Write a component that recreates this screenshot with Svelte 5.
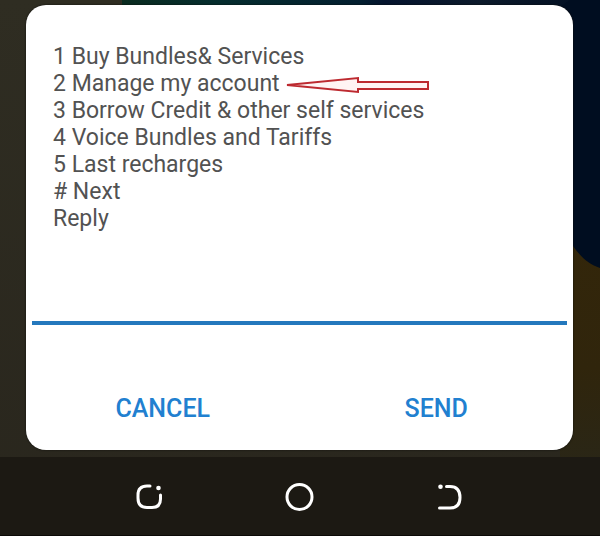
<script>
    let reply = $state("");

    const options = [
        "1 Buy Bundles& Services",
        "2 Manage my account",
        "3 Borrow Credit & other self services",
        "4 Voice Bundles and Tariffs",
        "5 Last recharges",
        "# Next",
    ];
    const marked = 1;
</script>

<div class="screen">
    <svg class="wallpaper" viewBox="0 0 600 536" preserveAspectRatio="none" aria-hidden="true">
        <defs>
            <linearGradient id="base" x1="0" y1="0" x2="0" y2="1">
                <stop offset="0" stop-color="#2f2d22" />
                <stop offset="1" stop-color="#29261d" />
            </linearGradient>
            <linearGradient id="top" x1="0" y1="0" x2="1" y2="0">
                <stop offset="0" stop-color="#0a2c20" />
                <stop offset="0.2" stop-color="#052d2e" />
                <stop offset="0.5" stop-color="#031f30" />
                <stop offset="0.55" stop-color="#04142e" />
                <stop offset="0.75" stop-color="#0c1a2b" />
                <stop offset="1" stop-color="#000d20" />
            </linearGradient>
            <linearGradient id="gold" x1="0" y1="0" x2="0" y2="1">
                <stop offset="0" stop-color="#33260a" />
                <stop offset="0.6" stop-color="#30250c" />
                <stop offset="1" stop-color="#2a2616" />
            </linearGradient>
        </defs>
        <rect width="600" height="536" fill="url(#base)" />
        <rect x="122" width="478" height="30" fill="url(#top)" />
        <rect x="560" y="230" width="40" height="230" fill="url(#gold)" />
        <path d="M540 20L570 0H600V268C588 264 580 256 573 246L540 200Z" fill="#000d20" />
    </svg>

    <form class="dialog" onsubmit={(e) => e.preventDefault()}>
        <div class="message">
            {#each options as option, i}
                <div class="option">
                    <span>{option}</span>
                    {#if i === marked}
                        <svg class="arrow" width="146" height="20" viewBox="0 0 146 20" aria-hidden="true">
                            <path d="M3 11L74 4V8H144V15H74V18Z" />
                        </svg>
                    {/if}
                </div>
            {/each}
            <label class="option" for="reply">Reply</label>
        </div>
        <input id="reply" type="text" autocomplete="off" bind:value={reply} />
        <div class="actions">
            <button type="button">CANCEL</button>
            <button type="submit">SEND</button>
        </div>
    </form>

    <nav class="navbar">
        <button type="button" aria-label="Recent apps">
            <svg width="30" height="30" viewBox="0 0 30 30">
                <path d="M15 4H12C6 4 3 7 3 13V16C3 22 6 25.5 12 25.5H17C23 25.5 25.5 22 25.5 17V13" />
                <circle class="dot" cx="23.5" cy="6" r="2.3" />
            </svg>
        </button>
        <button type="button" aria-label="Home">
            <svg width="30" height="30" viewBox="0 0 30 30">
                <circle cx="14.5" cy="15" r="12.5" />
            </svg>
        </button>
        <button type="button" aria-label="Back">
            <svg width="30" height="30" viewBox="0 0 30 30">
                <path d="M11.5 4.5H15C22 4.5 25 8 25 15.5C25 22.5 22 26 15 26H4.5" />
                <circle class="dot" cx="5.5" cy="4.8" r="2.3" />
            </svg>
        </button>
    </nav>
</div>

<style>
    :global(body) {
        margin: 0;
        background: #1c1913;
    }

    .screen {
        position: relative;
        display: flex;
        flex-direction: column;
        min-height: 100vh;
        font-family: Roboto, "Liberation Sans", sans-serif;
    }

    .wallpaper {
        position: absolute;
        width: 100%;
        height: 100%;
    }

    .dialog {
        position: relative;
        display: flex;
        flex-direction: column;
        margin: 5px 27px 7px 26px;
        border-radius: 20px;
        background: #fff;
        box-shadow: 0 0 2px #0c0c0a;
    }

    .message {
        padding: 38px 27px 0;
        color: #525252;
        font-size: 23px;
    }

    .option {
        display: flex;
        align-items: center;
        line-height: 27px;
        white-space: nowrap;
    }

    .arrow {
        margin-left: 4px;
        fill: #fff4f4;
        stroke: #bd2a30;
        stroke-width: 2;
    }

    input {
        height: 93px;
        box-sizing: border-box;
        margin: 0 6px;
        padding: 48px 20px 8px;
        border: none;
        border-bottom: 4px solid #2478bd;
        outline: none;
        background: transparent;
        color: #525252;
        font: inherit;
        font-size: 23px;
    }

    .actions {
        display: grid;
        grid-template-columns: 1fr 1fr;
        padding: 58px 0 17px;
    }

    button {
        padding: 0;
        border: none;
        background: none;
        font: inherit;
        cursor: pointer;
    }

    .actions button {
        height: 50px;
        color: #2180d0;
        font-size: 25px;
        font-weight: 500;
    }

    .navbar {
        position: relative;
        display: flex;
        flex: 1;
        align-items: center;
        justify-content: center;
        gap: 120px;
        min-height: 79px;
        background: #1c1913;
        box-shadow: inset 0 -1px #0c0a07;
    }

    .navbar button {
        display: flex;
    }

    .navbar svg {
        fill: none;
        stroke: #fff;
        stroke-width: 3;
        stroke-linecap: round;
    }

    .navbar .dot {
        fill: #fff;
        stroke: none;
    }
</style>
